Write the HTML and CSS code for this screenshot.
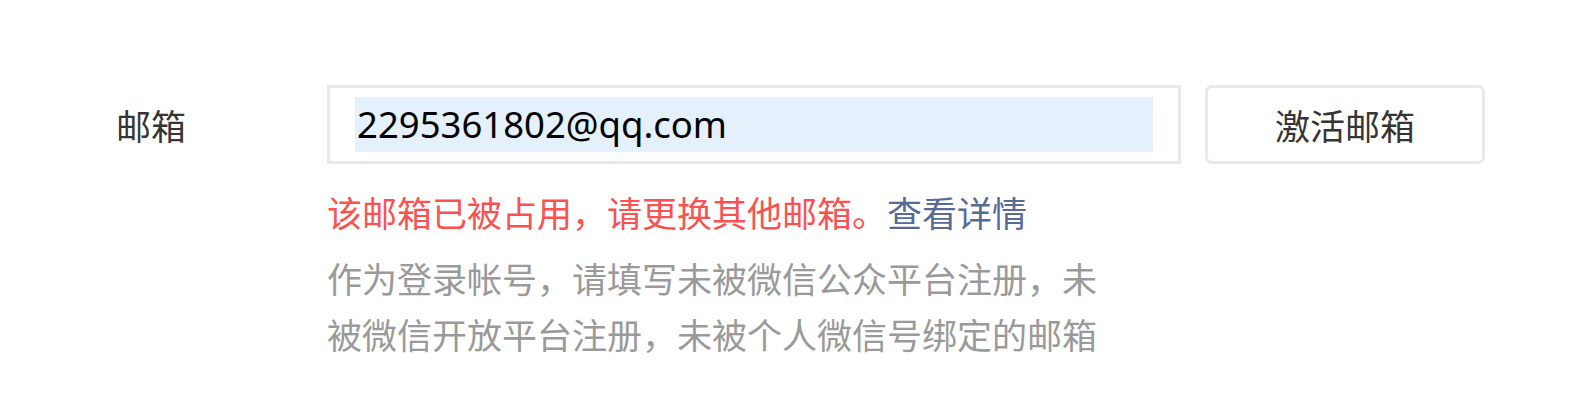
FILE: index.html
```html
<!DOCTYPE html>
<html lang="zh-CN">
<head>
<meta charset="utf-8">
<title>邮箱</title>
<link rel="stylesheet" href="styles.css">
</head>
<body>
<div class="form-row">
  <label class="form-label">邮箱</label>
  <div class="form-field">
    <div class="controls">
      <div class="input-box"><span class="input-value">2295361802@qq.com</span></div>
      <button class="btn" type="button">激活邮箱</button>
    </div>
    <p class="error-msg">该邮箱已被占用，请更换其他邮箱。<a class="link" href="#">查看详情</a></p>
    <p class="tips">作为登录帐号，请填写未被微信公众平台注册，未被微信开放平台注册，未被个人微信号绑定的邮箱</p>
  </div>
</div>
</body>
</html>
```

FILE: styles.css
```css
html, body {
  margin: 0;
  padding: 0;
  background: #fff;
}
body {
  font-family: "Noto Sans", "Noto Sans CJK SC", sans-serif;
  font-size: 35px;
  color: #353535;
}
.form-row {
  display: flex;
  align-items: flex-start;
  padding-top: 85px;
}
.form-label {
  width: 211px;
  padding-left: 116px;
  box-sizing: content-box;
  flex: none;
  line-height: 79px;
  padding-top: 2px;
  color: #353535;
}
.form-field {
  display: flex;
  flex-direction: column;
}
.controls {
  display: flex;
  gap: 24px;
}
.input-box {
  width: 854px;
  height: 79px;
  flex: none;
  box-sizing: border-box;
  border: 3px solid #e8e8ed;
  padding: 9px 25px;
  display: flex;
}
.input-value {
  flex: 1;
  background: #e4f0fb;
  color: #000;
  font-size: 36.5px;
  line-height: 55px;
  padding-left: 2px;
}
.btn {
  width: 280px;
  height: 79px;
  flex: none;
  box-sizing: border-box;
  border: 3px solid #e8e8ed;
  border-radius: 7px;
  background: #fff;
  font-family: "Noto Sans CJK SC", sans-serif;
  font-size: 35px;
  color: #353535;
  padding: 0;
}
.error-msg {
  margin: 22px 0 0;
  line-height: 56px;
  color: #fa5151;
}
.link {
  color: #576b95;
  text-decoration: none;
}
.tips {
  margin: 10px 0 0;
  width: 772px;
  line-height: 56px;
  color: #9a9a9a;
}
```
